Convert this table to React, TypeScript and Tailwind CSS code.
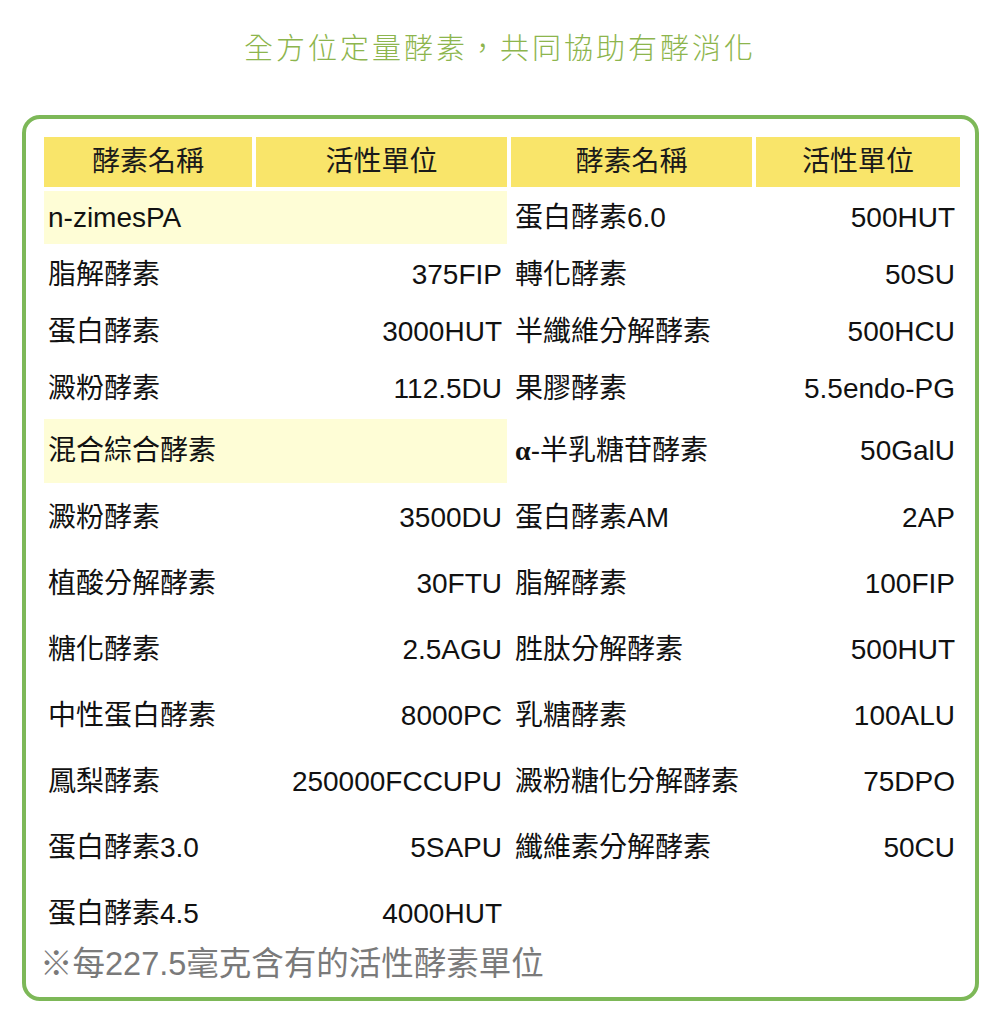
import React from "react";

type Row = {
    name?: React.ReactNode;
    unit?: string;
    name2?: React.ReactNode;
    unit2?: string;
    group?: boolean;
    h: string;
};

const alpha = (
    <span className="font-bold" style={{ fontFamily: '"Liberation Serif", serif' }}>
        α
    </span>
);

const rows: Row[] = [
    { name: "n-zimesPA", group: true, name2: "蛋白酵素6.0", unit2: "500HUT", h: "h-[53px]" },
    { name: "脂解酵素", unit: "375FIP", name2: "轉化酵素", unit2: "50SU", h: "h-[53px]" },
    { name: "蛋白酵素", unit: "3000HUT", name2: "半纖維分解酵素", unit2: "500HCU", h: "h-[53px]" },
    { name: "澱粉酵素", unit: "112.5DU", name2: "果膠酵素", unit2: "5.5endo-PG", h: "h-[53px]" },
    {
        name: "混合綜合酵素",
        group: true,
        name2: <>{alpha}-半乳糖苷酵素</>,
        unit2: "50GalU",
        h: "h-[64px]",
    },
    { name: "澱粉酵素", unit: "3500DU", name2: "蛋白酵素AM", unit2: "2AP", h: "h-[62px]" },
    { name: "植酸分解酵素", unit: "30FTU", name2: "脂解酵素", unit2: "100FIP", h: "h-[62px]" },
    { name: "糖化酵素", unit: "2.5AGU", name2: "胜肽分解酵素", unit2: "500HUT", h: "h-[62px]" },
    { name: "中性蛋白酵素", unit: "8000PC", name2: "乳糖酵素", unit2: "100ALU", h: "h-[62px]" },
    { name: "鳳梨酵素", unit: "250000FCCUPU", name2: "澱粉糖化分解酵素", unit2: "75DPO", h: "h-[62px]" },
    { name: "蛋白酵素3.0", unit: "5SAPU", name2: "纖維素分解酵素", unit2: "50CU", h: "h-[62px]" },
    { name: "蛋白酵素4.5", unit: "4000HUT", h: "h-[61px]" },
];

const FONT = '"Liberation Sans", "Noto Sans CJK TC", sans-serif';

export default function App() {
    return (
        <div className="h-[1028px] w-[1000px] overflow-hidden bg-white" style={{ fontFamily: FONT }}>
            {/* TITLE */}
            <h1 className="pt-[30px] text-center text-[29px] font-light leading-[38px] tracking-[3px] text-[#8db54d]">
                全方位定量酵素，共同協助有酵消化
            </h1>

            {/* BOX */}
            <div className="ml-[22px] mt-[47px] h-[886px] w-[957px] rounded-[18px] border-4 border-[#7db858] px-[14px] pt-[14px]">
                <table className="w-[924px] table-fixed border-separate border-spacing-[4px] text-[28px] text-[#111]">
                    <colgroup>
                        <col className="w-[208px]" />
                        <col className="w-[251px]" />
                        <col className="w-[241px]" />
                        <col className="w-[204px]" />
                    </colgroup>
                    <thead>
                        <tr className="h-[50px]">
                            {["酵素名稱", "活性單位", "酵素名稱", "活性單位"].map((h, i) => (
                                <th key={i} className="bg-[#f9e56a] p-0 text-center font-normal text-[#1a1a1a]">
                                    {h}
                                </th>
                            ))}
                        </tr>
                    </thead>
                    <tbody>
                        {rows.map((r, i) => (
                            <tr key={i} className={r.h}>
                                {r.group ? (
                                    <td colSpan={2} className="bg-[#fefdd6] py-0 pl-[4px] pr-[5px] whitespace-nowrap">
                                        {r.name}
                                    </td>
                                ) : (
                                    <>
                                        <td className="py-0 pl-[4px] pr-[5px] whitespace-nowrap">{r.name}</td>
                                        <td className="py-0 pl-[4px] pr-[5px] text-right whitespace-nowrap">{r.unit}</td>
                                    </>
                                )}
                                <td className="py-0 pl-[4px] pr-[5px] whitespace-nowrap">{r.name2}</td>
                                <td className="py-0 pl-[4px] pr-[5px] text-right whitespace-nowrap">{r.unit2}</td>
                            </tr>
                        ))}
                    </tbody>
                </table>

                {/* NOTE */}
                <p className="-mt-[2px] text-[32.5px] leading-[36px] text-[#7a7a7a]">
                    ※每227.5毫克含有的活性酵素單位
                </p>
            </div>
        </div>
    );
}
